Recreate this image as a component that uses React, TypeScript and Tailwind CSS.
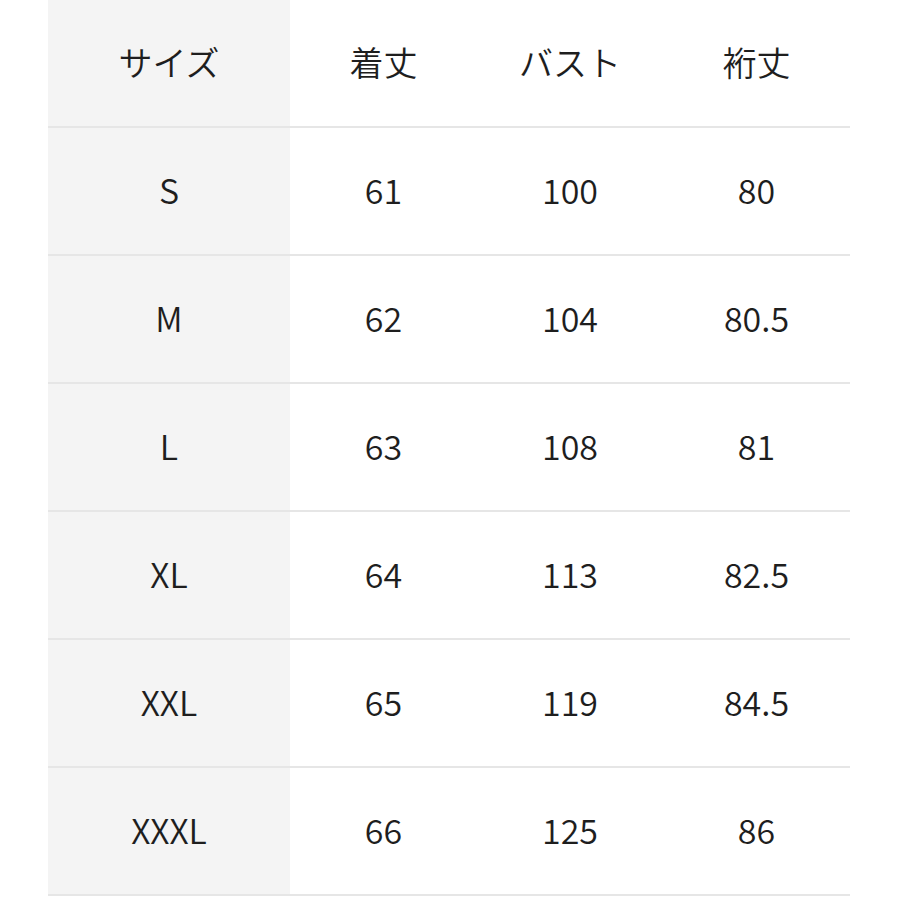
const rows = [
  ["S", "61", "100", "80"],
  ["M", "62", "104", "80.5"],
  ["L", "63", "108", "81"],
  ["XL", "64", "113", "82.5"],
  ["XXL", "65", "119", "84.5"],
  ["XXXL", "66", "125", "86"],
];

const header = ["サイズ", "着丈", "バスト", "裄丈"];

function Row({ cells }: { cells: string[] }) {
  return (
    <div className="grid grid-cols-[242px_187px_186px_187px] h-[128px] border-b-2 border-[#e6e6e6]">
      {cells.map((c, i) => (
        <div
          key={i}
          className={`flex items-center justify-center pb-1 ${i === 0 ? "bg-[#f4f4f4]" : ""}`}
        >
          {c}
        </div>
      ))}
    </div>
  );
}

export default function App() {
  return (
    <div className="w-[900px] h-[900px] bg-white font-['Noto_Sans_CJK_JP','Noto_Sans',sans-serif] font-[350] text-[34px] text-[#1e1e1e]">
      <div className="ml-[48px] w-[802px]">
        <Row cells={header} />
        {rows.map((r) => (
          <Row key={r[0]} cells={r} />
        ))}
      </div>
    </div>
  );
}
